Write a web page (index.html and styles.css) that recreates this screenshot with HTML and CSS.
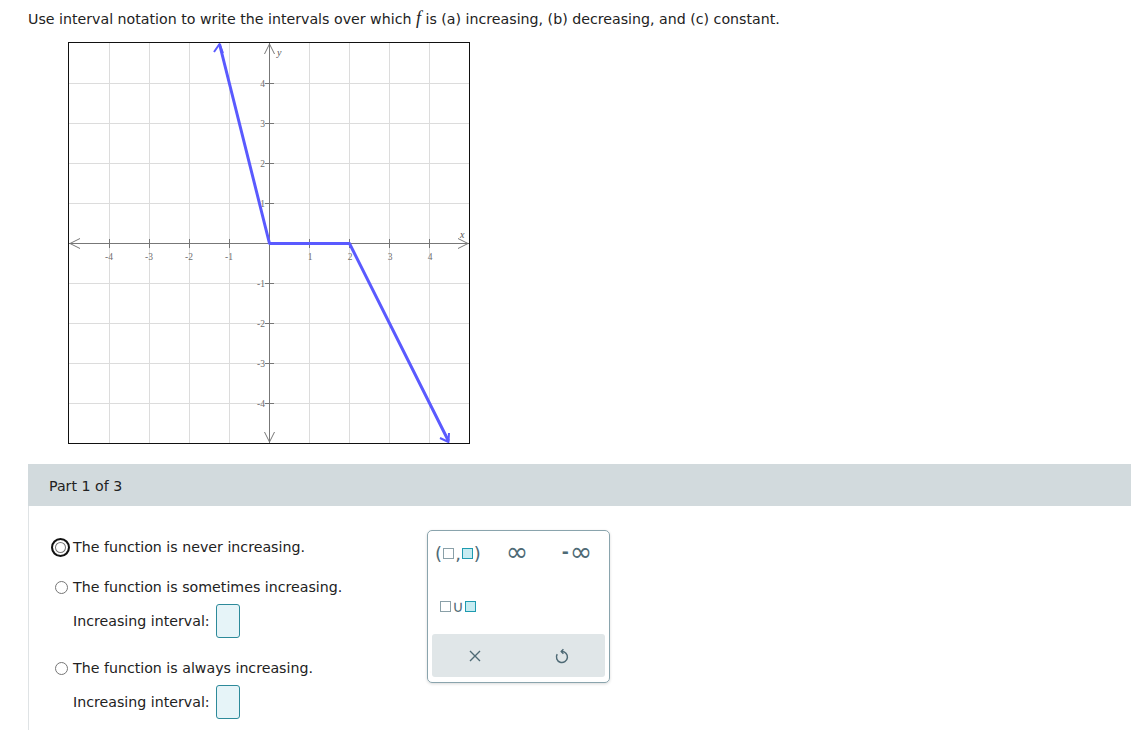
FILE: index.html
```html
<!DOCTYPE html>
<html>
  <head>
    <meta charset="utf-8"/>
    <link rel="stylesheet" href="styles.css">
  </head>
  <body>
    <div class="question">
      Use interval notation to write the intervals over which <span class="mvar">f</span> is (a) increasing, (b) decreasing, and (c) constant.
    </div>

    <div class="graph">
      <svg width="402" height="402" viewBox="0 0 402 402">
        <g transform="translate(1,1)">
          <g stroke="#dcdcdc" stroke-width="1">
            <line x1="40.5" y1="0" x2="40.5" y2="400"/>
            <line x1="80.5" y1="0" x2="80.5" y2="400"/>
            <line x1="120.5" y1="0" x2="120.5" y2="400"/>
            <line x1="160.5" y1="0" x2="160.5" y2="400"/>
            <line x1="240.5" y1="0" x2="240.5" y2="400"/>
            <line x1="280.5" y1="0" x2="280.5" y2="400"/>
            <line x1="320.5" y1="0" x2="320.5" y2="400"/>
            <line x1="360.5" y1="0" x2="360.5" y2="400"/>
            <line x1="0" y1="40.5" x2="400" y2="40.5"/>
            <line x1="0" y1="80.5" x2="400" y2="80.5"/>
            <line x1="0" y1="120.5" x2="400" y2="120.5"/>
            <line x1="0" y1="160.5" x2="400" y2="160.5"/>
            <line x1="0" y1="240.5" x2="400" y2="240.5"/>
            <line x1="0" y1="280.5" x2="400" y2="280.5"/>
            <line x1="0" y1="320.5" x2="400" y2="320.5"/>
            <line x1="0" y1="360.5" x2="400" y2="360.5"/>
          </g>
          <g stroke="#777" stroke-width="1" fill="none">
            <line x1="0" y1="200.5" x2="400" y2="200.5"/>
            <line x1="200.5" y1="0" x2="200.5" y2="400"/>
            <polyline points="11,195.5 1,200.5 11,205.5"/>
            <polyline points="389,195.5 399,200.5 389,205.5"/>
            <polyline points="195.5,11 200.5,1 205.5,11"/>
            <polyline points="195.5,389 200.5,399 205.5,389"/>
            <line x1="40.5" y1="196" x2="40.5" y2="205"/>
            <line x1="80.5" y1="196" x2="80.5" y2="205"/>
            <line x1="120.5" y1="196" x2="120.5" y2="205"/>
            <line x1="160.5" y1="196" x2="160.5" y2="205"/>
            <line x1="240.5" y1="196" x2="240.5" y2="205"/>
            <line x1="280.5" y1="196" x2="280.5" y2="205"/>
            <line x1="320.5" y1="196" x2="320.5" y2="205"/>
            <line x1="360.5" y1="196" x2="360.5" y2="205"/>
            <line x1="196" y1="40.5" x2="205" y2="40.5"/>
            <line x1="196" y1="80.5" x2="205" y2="80.5"/>
            <line x1="196" y1="120.5" x2="205" y2="120.5"/>
            <line x1="196" y1="160.5" x2="205" y2="160.5"/>
            <line x1="196" y1="240.5" x2="205" y2="240.5"/>
            <line x1="196" y1="280.5" x2="205" y2="280.5"/>
            <line x1="196" y1="320.5" x2="205" y2="320.5"/>
            <line x1="196" y1="360.5" x2="205" y2="360.5"/>
          </g>
          <g class="ticklabel" text-anchor="middle">
            <text x="40" y="217">-4</text>
            <text x="80" y="217">-3</text>
            <text x="120" y="217">-2</text>
            <text x="160" y="217">-1</text>
            <text x="241" y="217">1</text>
            <text x="281" y="217">2</text>
            <text x="321" y="217">3</text>
            <text x="361" y="217">4</text>
          </g>
          <g class="ticklabel" text-anchor="end">
            <text x="196" y="44">4</text>
            <text x="196" y="84">3</text>
            <text x="196" y="124">2</text>
            <text x="196" y="164">1</text>
            <text x="196" y="244">-1</text>
            <text x="196" y="284">-2</text>
            <text x="196" y="324">-3</text>
            <text x="196" y="364">-4</text>
          </g>
          <text class="axislabel" x="391" y="195">x</text>
          <text class="axislabel" x="208" y="13">y</text>
          <g stroke="#5a5aff" stroke-width="3" fill="none" stroke-linejoin="round">
            <polyline points="150.5,1 200.5,200.5 280.5,200.5 379.5,398"/>
            <polyline points="145,9 150.5,1 154,10" stroke-width="2"/>
            <polyline points="371,395 379.5,399 380,390" stroke-width="2"/>
          </g>
        </g>
        <rect x="0.5" y="0.5" width="401" height="401" fill="none" stroke="#111" stroke-width="1"/>
      </svg>
    </div>

    <div class="part">
      <div class="part-head">Part 1 of 3</div>
      <div class="part-body">
        <div class="choices">
          <div class="choice">
            <span class="radio focused"></span>
            <span>The function is never increasing.</span>
          </div>
          <div class="choice spaced">
            <span class="radio"></span>
            <span>The function is sometimes increasing.</span>
          </div>
          <div class="answer">
            <span>Increasing interval:</span>
            <span class="answer-box"></span>
          </div>
          <div class="choice spaced">
            <span class="radio"></span>
            <span>The function is always increasing.</span>
          </div>
          <div class="answer">
            <span>Increasing interval:</span>
            <span class="answer-box"></span>
          </div>
        </div>

        <div class="palette">
          <div class="palette-keys">
            <span class="key key-interval">(<i class="sq"></i>,<i class="sq sq-on"></i>)</span>
            <span class="key key-inf">&infin;</span>
            <span class="key key-inf"><b class="minus">-</b>&infin;</span>
            <span class="key key-union"><i class="sq"></i>&cup;<i class="sq sq-on"></i></span>
          </div>
          <div class="palette-tools">
            <span class="tool">
              <svg width="14" height="14" viewBox="0 0 14 14"><path d="M2 2 L12 12 M12 2 L2 12" stroke="#4e6a75" stroke-width="1.4" fill="none"/></svg>
            </span>
            <span class="tool">
              <svg width="16" height="16" viewBox="0 0 16 16"><path d="M7.5 3.5 A5.5 5.5 0 1 1 3.2 6.2" stroke="#4e6a75" stroke-width="1.5" fill="none"/><path d="M9.4 1.3 L7.3 3.5 L9.4 5.7" stroke="#4e6a75" stroke-width="1.5" fill="none"/></svg>
            </span>
          </div>
        </div>
      </div>
    </div>
  </body>
</html>
```

FILE: styles.css
```css
html, body {
  margin: 0;
  padding: 0;
  background-color: #fff;
}
body {
  font-family: "DejaVu Sans", Verdana, sans-serif;
  font-size: 14.2px;
  color: #222;
}
.question {
  padding: 8px 0 0 28px;
  height: 25px;
}
.mvar {
  font-family: "Liberation Serif", serif;
  font-style: italic;
  font-size: 18px;
}
.graph {
  padding: 9px 0 0 68px;
  height: 422px;
}
.graph svg {
  display: block;
}
.ticklabel text {
  font-family: "Liberation Serif", serif;
  font-size: 9.5px;
  fill: #6f6f6f;
}
.axislabel {
  font-family: "Liberation Serif", serif;
  font-style: italic;
  font-size: 10px;
  fill: #555;
}
.part {
  margin-left: 28px;
}
.part-head {
  background-color: #d2dadd;
  height: 42px;
  line-height: 44px;
  padding-left: 21px;
  color: #222;
}
.part-body {
  border-left: 1px solid #dfe3e5;
  height: 224px;
  display: flex;
  align-items: flex-start;
  padding-left: 22px;
}
.choices {
  padding-top: 32px;
  width: 376px;
}
.choice {
  display: flex;
  align-items: center;
  height: 18px;
  gap: 4px;
}
.choice.spaced {
  margin-top: 22px;
}
.radio {
  width: 13px;
  height: 13px;
  border: 1px solid #767676;
  border-radius: 50%;
  margin-left: 4px;
  margin-right: 1px;
  box-sizing: border-box;
}
.radio.focused {
  width: 19px;
  height: 19px;
  margin-left: 0;
  margin-right: -1px;
  border: 2px solid #111;
  box-shadow: inset 0 0 0 2px #fff, inset 0 0 0 3px #767676;
}
.answer {
  display: flex;
  align-items: center;
  gap: 6px;
  padding-left: 22px;
  margin-top: 8px;
  height: 33px;
}
.answer-box {
  width: 22px;
  height: 32px;
  border: 1px solid #2d8a9a;
  border-radius: 3px;
  background-color: #e6f4f8;
}
.palette {
  margin-top: 24px;
  width: 183px;
  height: 153px;
  border: 1px solid #8aa4ad;
  border-radius: 5px;
  box-shadow: 0 1px 3px rgba(0, 0, 0, 0.15);
  box-sizing: border-box;
  padding: 4px;
  display: flex;
  flex-direction: column;
  color: #4e6a75;
}
.palette-keys {
  display: grid;
  grid-template-columns: 52px 66px 54px;
  grid-template-rows: 36px 36px;
  row-gap: 17px;
  height: 99px;
}
.key {
  display: flex;
  align-items: center;
  justify-content: center;
  font-size: 18px;
}
.key-inf {
  font-size: 27px;
  line-height: 1;
  padding-bottom: 4px;
}
.minus {
  font-size: 17px;
  font-weight: bold;
  margin-right: 1px;
  padding-top: 3px;
}
.key-union {
  font-size: 16px;
}
.sq {
  display: inline-block;
  width: 9px;
  height: 9px;
  border: 1px solid #8aa0a8;
  background-color: #fff;
  margin: 0 1px;
}
.sq.sq-on {
  border-color: #1e9bb0;
  background-color: #c6ecf2;
}
.palette-tools {
  background-color: #e0e6e8;
  border-radius: 3px;
  height: 43px;
  display: grid;
  grid-template-columns: 1fr 1fr;
  align-items: center;
  justify-items: center;
}
.tool svg {
  display: block;
}
```
